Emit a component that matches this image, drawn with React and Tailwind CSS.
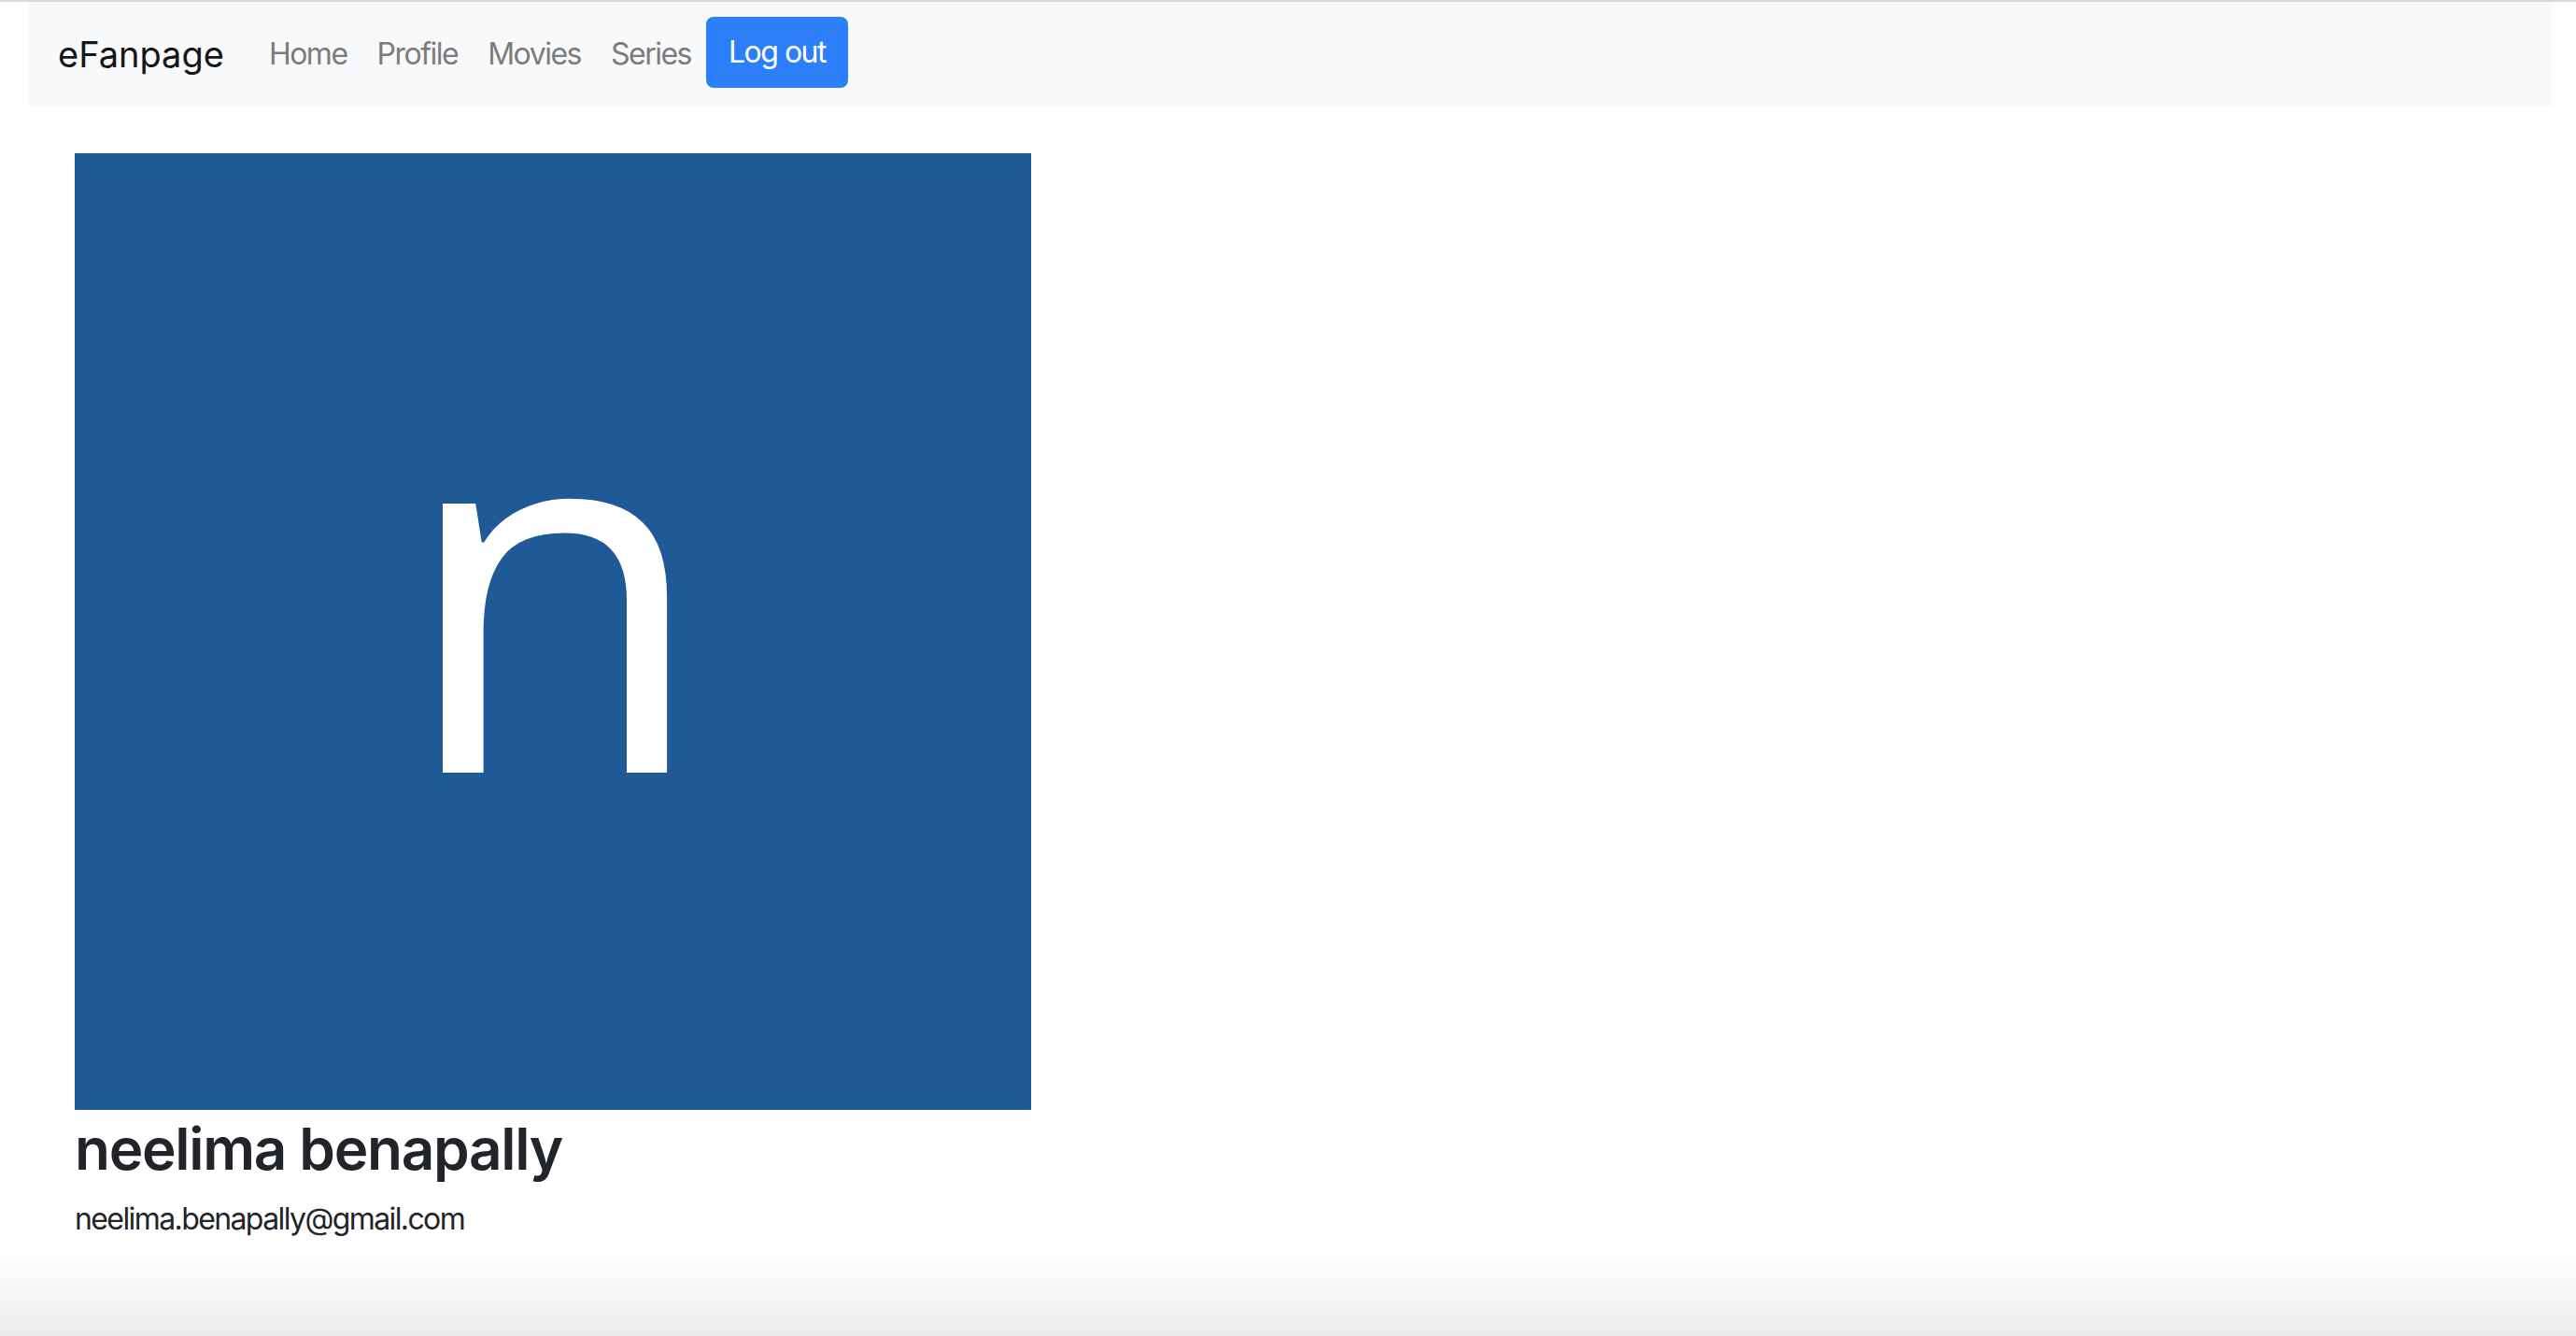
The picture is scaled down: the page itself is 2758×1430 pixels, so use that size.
const links = ['Home', 'Profile', 'Movies', 'Series']

function Navbar() {
  return (
    <nav className="ml-[30px] mr-[26px] flex h-[112px] shrink-0 items-center bg-[#f8f9fa] px-[32px]">
      <a href="#" className="mr-[32px] text-[38px] leading-[57px] text-[#161616]">
        eFanpage
      </a>
      <div className="flex items-center">
        {links.map((label) => (
          <a
            key={label}
            href="#"
            className="px-[16px] text-[32px] leading-[48px] tracking-[-1.5px] text-[#7c7c7d]"
          >
            {label}
          </a>
        ))}
        <button
          type="button"
          className="mb-[4px] h-[76px] rounded-[8px] bg-[#2d7ff9] px-[24px] text-[32px] leading-[48px] tracking-[-1.5px] text-white"
        >
          Log out
        </button>
      </div>
    </nav>
  )
}

function Avatar({ letter }) {
  return (
    <svg viewBox="0 0 1024 1024" className="block h-[1024px] w-[1024px]">
      <rect width="1024" height="1024" fill="#1f5a96" />
      <text
        x="513"
        y="663"
        textAnchor="middle"
        fill="#ffffff"
        fontSize="538"
        fontFamily="'Open Sans', 'Liberation Sans', sans-serif"
      >
        {letter}
      </text>
    </svg>
  )
}

export default function App() {
  return (
    <div className="flex h-screen flex-col bg-white font-['Inter','Liberation_Sans',sans-serif]">
      <div className="h-[2px] shrink-0 bg-[#d9d9dc]" />
      <Navbar />

      <main className="px-[80px] pt-[50px] text-[#212529]">
        <Avatar letter="n" />
        <h2 className="mt-[5px] text-[62px] leading-[74px] font-semibold tracking-[-1.3px]">
          neelima benapally
        </h2>
        <p className="mt-[14px] text-[32px] leading-[48px] tracking-[-1.6px]">
          neelima.benapally@gmail.com
        </p>
      </main>

      <div className="flex-1" />
      <div className="h-[90px] shrink-0 bg-gradient-to-b from-white to-[#ebebeb]" />
    </div>
  )
}
